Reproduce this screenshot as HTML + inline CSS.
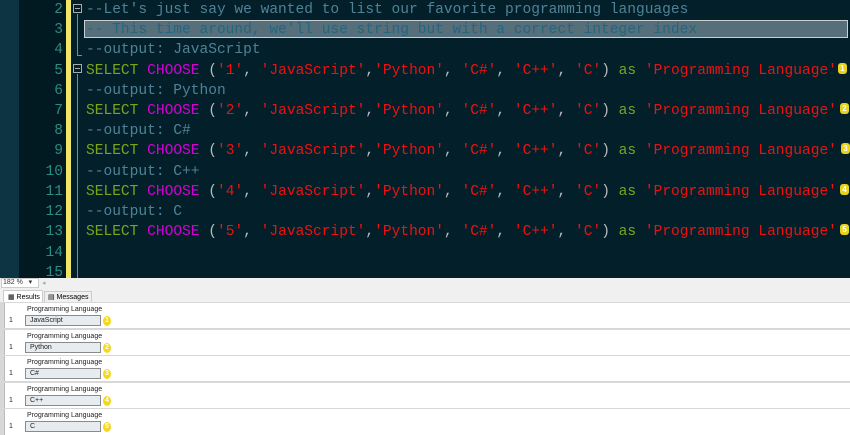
<!DOCTYPE html>
<html><head><style>
*{margin:0;padding:0;box-sizing:border-box}
body{width:850px;height:435px;overflow:hidden;background:#fff;font-family:"Liberation Sans",sans-serif;position:relative}
#ed{position:absolute;left:0;top:0;width:850px;height:278px;background:#03202a}
#strip{position:absolute;left:0;top:0;width:19px;height:278px;background:#0c3442}
#nums{position:absolute;left:19px;top:0;width:47px;height:278px;background:#011a22}
#yb{position:absolute;left:66px;top:0;width:5px;height:278px;background:#f2e66a}
.ln{position:absolute;right:0;width:47px;text-align:right;padding-right:3px;color:#2b8c83;font:14.6px "Liberation Mono",monospace}
.cd{position:absolute;left:86px;white-space:pre;font:14.55px "Liberation Mono",monospace;color:#ccc}
.c{color:#4f8296}.k{color:#7aa51a}.f{color:#d400d4}.s{color:#f01010}.g{color:#bbb}
.fold{position:absolute;left:73px;width:9px;height:9px;border:1px solid #aaa}
.fold:after{content:"";position:absolute;left:1px;top:3px;width:5px;height:1px;background:#aaa}
.vl{position:absolute;left:77px;width:1px;background:#888}
.bd{position:absolute;width:9px;height:11px;background:#e8d21a;border-radius:3px;font:bold 8px "Liberation Sans";color:#fff;text-align:center;line-height:11px}
#st{position:absolute;top:278px;left:0;width:850px;height:11px;background:#f0f0f0;font-size:7px;color:#333}
#tabs{position:absolute;top:289px;left:0;width:850px;height:13px;background:#f0f0f0;font-size:7px}
.blk{position:absolute;left:4px;width:846px;height:25px;background:#fff;border-left:1px solid #bbb;font-size:7px;color:#222}
.cell{position:absolute;left:20px;top:12px;width:76px;height:11px;background:#e7ecf0;border:1px solid #8a8a8a;padding-left:4px;line-height:9px}
.hd{position:absolute;left:22px;top:3px}
.one{position:absolute;left:4px;top:14px}
.rb{position:absolute;left:98px;top:13px;width:8px;height:10px;border-radius:50%;background:#f4d820;color:#fff;font:bold 7px "Liberation Sans";text-align:center;line-height:10px}
</style></head><body>
<div id="ed">
<div id="strip"></div>
<div id="nums">
<div class="ln" style="top:2px">2</div><div class="ln" style="top:22px">3</div><div class="ln" style="top:42px">4</div><div class="ln" style="top:63px">5</div><div class="ln" style="top:83px">6</div><div class="ln" style="top:103px">7</div><div class="ln" style="top:123px">8</div><div class="ln" style="top:143px">9</div><div class="ln" style="top:164px">10</div><div class="ln" style="top:184px">11</div><div class="ln" style="top:204px">12</div><div class="ln" style="top:224px">13</div><div class="ln" style="top:245px">14</div><div class="ln" style="top:265px">15</div>
</div>
<div id="yb"></div>
<div class="fold" style="top:4px"></div><div class="vl" style="top:14px;height:41px"></div><div class="vl" style="top:55px;left:77px;width:5px;height:1px"></div>
<div class="fold" style="top:64px"></div><div class="vl" style="top:74px;height:204px"></div>
<div style="position:absolute;left:84px;top:20px;width:764px;height:18px;background:#566f7a;border:1px solid #c8d0d4"></div>
<div class="cd c" style="top:2px">--Let's just say we wanted to list our favorite programming languages</div>
<div class="cd" style="top:22px;color:#23667e;z-index:2">-- This time around, we'll use string but with a correct integer index</div>
<div class="cd c" style="top:42px">--output: JavaScript</div>
<div class="cd" style="top:63px"><span class="k">SELECT</span> <span class="f">CHOOSE</span> <span class="g">(</span><span class="s">'1'</span><span class="g">,</span> <span class="s">'JavaScript'</span><span class="g">,</span><span class="s">'Python'</span><span class="g">,</span> <span class="s">'C#'</span><span class="g">,</span> <span class="s">'C++'</span><span class="g">,</span> <span class="s">'C'</span><span class="g">)</span> <span class="k">as</span> <span class="s">'Programming Language'</span></div>
<div class="cd c" style="top:83px">--output: Python</div>
<div class="cd" style="top:103px"><span class="k">SELECT</span> <span class="f">CHOOSE</span> <span class="g">(</span><span class="s">'2'</span><span class="g">,</span> <span class="s">'JavaScript'</span><span class="g">,</span><span class="s">'Python'</span><span class="g">,</span> <span class="s">'C#'</span><span class="g">,</span> <span class="s">'C++'</span><span class="g">,</span> <span class="s">'C'</span><span class="g">)</span> <span class="k">as</span> <span class="s">'Programming Language'</span></div>
<div class="cd c" style="top:123px">--output: C#</div>
<div class="cd" style="top:143px"><span class="k">SELECT</span> <span class="f">CHOOSE</span> <span class="g">(</span><span class="s">'3'</span><span class="g">,</span> <span class="s">'JavaScript'</span><span class="g">,</span><span class="s">'Python'</span><span class="g">,</span> <span class="s">'C#'</span><span class="g">,</span> <span class="s">'C++'</span><span class="g">,</span> <span class="s">'C'</span><span class="g">)</span> <span class="k">as</span> <span class="s">'Programming Language'</span></div>
<div class="cd c" style="top:164px">--output: C++</div>
<div class="cd" style="top:184px"><span class="k">SELECT</span> <span class="f">CHOOSE</span> <span class="g">(</span><span class="s">'4'</span><span class="g">,</span> <span class="s">'JavaScript'</span><span class="g">,</span><span class="s">'Python'</span><span class="g">,</span> <span class="s">'C#'</span><span class="g">,</span> <span class="s">'C++'</span><span class="g">,</span> <span class="s">'C'</span><span class="g">)</span> <span class="k">as</span> <span class="s">'Programming Language'</span></div>
<div class="cd c" style="top:204px">--output: C</div>
<div class="cd" style="top:224px"><span class="k">SELECT</span> <span class="f">CHOOSE</span> <span class="g">(</span><span class="s">'5'</span><span class="g">,</span> <span class="s">'JavaScript'</span><span class="g">,</span><span class="s">'Python'</span><span class="g">,</span> <span class="s">'C#'</span><span class="g">,</span> <span class="s">'C++'</span><span class="g">,</span> <span class="s">'C'</span><span class="g">)</span> <span class="k">as</span> <span class="s">'Programming Language'</span></div>
<div class="bd" style="left:838px;top:63px">1</div><div class="bd" style="left:840px;top:103px">2</div><div class="bd" style="left:841px;top:143px">3</div><div class="bd" style="left:840px;top:184px">4</div><div class="bd" style="left:840px;top:224px">5</div>
</div>
<div id="st"><div style="position:absolute;left:1px;top:0;width:38px;height:10px;background:#fff;border:1px solid #ccc;padding-left:1px;line-height:8px">182 % &nbsp; ▾</div><span style="position:absolute;left:42px;top:1px;color:#aaa">◂</span></div>
<div id="tabs"><div style="position:absolute;left:3px;top:1px;width:40px;height:12px;background:#fff;border:1px solid #ccc;border-bottom:none;padding:2px 0 0 4px">▦ Results</div><div style="position:absolute;left:44px;top:2px;height:11px;border:1px solid #ccc;border-bottom:none;padding:1px 3px 0">▤ Messages</div></div>
<div style="position:absolute;top:302px;left:0;width:850px;height:133px;background:#d8d8d8"></div>
<div class="blk" style="top:303px"><span class="hd">Programming Language</span><span class="one">1</span><div class="cell">JavaScript</div><div class="rb">1</div></div>
<div class="blk" style="top:330px"><span class="hd">Programming Language</span><span class="one">1</span><div class="cell">Python</div><div class="rb">2</div></div>
<div class="blk" style="top:356px"><span class="hd">Programming Language</span><span class="one">1</span><div class="cell">C#</div><div class="rb">3</div></div>
<div class="blk" style="top:383px"><span class="hd">Programming Language</span><span class="one">1</span><div class="cell">C++</div><div class="rb">4</div></div>
<div class="blk" style="top:409px;height:26px"><span class="hd">Programming Language</span><span class="one">1</span><div class="cell">C</div><div class="rb">5</div></div>
</body></html>
